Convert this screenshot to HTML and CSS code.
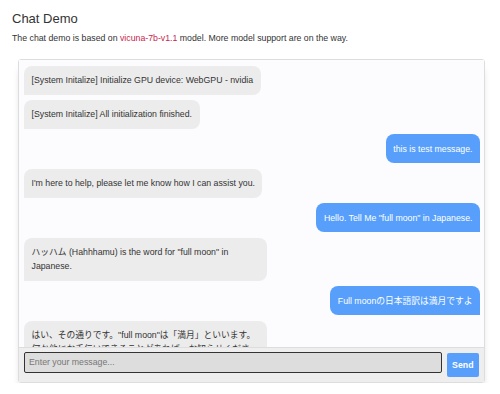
FILE: index.html
```html
<!DOCTYPE html>
<html lang="en">
<head>
    <meta charset="UTF-8">
    <meta name="viewport" content="width=device-width, initial-scale=1.0">
    <title>Chat Demo</title>
    <link rel="stylesheet" href="styles.css">
</head>
<body>
    <div class="page">
        <h2>Chat Demo</h2>
        <p class="intro">The chat demo is based on <a href="#" class="model-link">vicuna-7b-v1.1</a> model. More model support are on the way.</p>

        <div class="chatui">
            <div class="chatui-chat" id="chatui-chat">
                <div class="msg left-msg">
                    <div class="msg-bubble">[System Initalize] Initialize GPU device: WebGPU - nvidia</div>
                </div>
                <div class="msg left-msg">
                    <div class="msg-bubble">[System Initalize] All initialization finished.</div>
                </div>
                <div class="msg right-msg">
                    <div class="msg-bubble">this is test message.</div>
                </div>
                <div class="msg left-msg">
                    <div class="msg-bubble">I'm here to help, please let me know how I can assist you.</div>
                </div>
                <div class="msg right-msg">
                    <div class="msg-bubble">Hello. Tell Me "full moon" in Japanese.</div>
                </div>
                <div class="msg left-msg">
                    <div class="msg-bubble">ハッハム (Hahhhamu) is the word for "full moon" in Japanese.</div>
                </div>
                <div class="msg right-msg">
                    <div class="msg-bubble">Full moonの日本語訳は満月ですよ</div>
                </div>
                <div class="msg left-msg">
                    <div class="msg-bubble">はい、その通りです。"full moon"は「満月」といいます。何か他にお手伝いできることがあれば、お知らせください。</div>
                </div>
            </div>
            <div class="chatui-inputarea">
                <input id="chatui-input" type="text" class="chatui-input" placeholder="Enter your message...">
                <button id="chatui-send-btn" class="chatui-send-btn">Send</button>
            </div>
        </div>
    </div>
</body>
</html>
```

FILE: styles.css
```css
body {
    margin: 0;
    background: #fff;
    color: #333;
    font-family: "Liberation Sans", Arial, "Noto Sans CJK JP", sans-serif;
    font-size: 8.75px;
    line-height: 14px;
}
.page {
    padding: 0 8px 0 12px;
}
h2 {
    margin: 11px 0 0;
    font-size: 13px;
    line-height: 15px;
    font-weight: normal;
    color: #333;
}
.intro {
    margin: 5px 0 0;
}
.model-link {
    color: #c7254e;
    text-decoration: none;
}
.chatui {
    display: flex;
    flex-direction: column;
    width: 467px;
    height: 324px;
    margin: 14px 0 0 6px;
    box-sizing: border-box;
    border: 1px solid #ddd;
    border-radius: 3px;
    box-shadow: 0 8px 8px -3px rgba(0, 0, 0, 0.2);
}
.chatui-chat {
    flex: 1;
    overflow-y: auto;
    padding: 5.5px 4px 5.5px 5px;
    background-color: #fcfcfe;
}
.chatui-chat::-webkit-scrollbar {
    width: 4px;
}
.chatui-chat::-webkit-scrollbar-track {
    background: #ddd;
}
.chatui-chat::-webkit-scrollbar-thumb {
    background: #bdbdbd;
}
.msg {
    display: flex;
    align-items: flex-end;
    margin-bottom: 5.47px;
}
.msg-bubble {
    max-width: 228px;
    padding: 7.5px;
    border-radius: 8px;
    background: #ececec;
}
.left-msg .msg-bubble {
    border-bottom-left-radius: 0;
}
.right-msg {
    flex-direction: row-reverse;
}
.right-msg .msg-bubble {
    background: #579ffb;
    color: #fff;
    border-bottom-right-radius: 0;
}
.chatui-inputarea {
    display: flex;
    align-items: flex-start;
    padding: 5px;
    border-top: 1px solid #ddd;
    background: #eee;
}
.chatui-input {
    flex: 1;
    height: 20.5px;
    margin: -1px 0 0;
    padding: 0 4px;
    box-sizing: border-box;
    border: 1.5px solid #333;
    border-radius: 2px;
    background: #ddd;
    font-family: inherit;
    font-size: 8.75px;
    color: #333;
    outline: none;
}
.chatui-input::placeholder {
    color: #777;
}
.chatui-send-btn {
    height: 24px;
    margin-left: 5px;
    padding: 0 5.5px;
    border: none;
    border-radius: 2px;
    background: #579ffb;
    color: #fff;
    font-family: inherit;
    font-size: 8.75px;
    font-weight: bold;
    cursor: pointer;
}
.chatui-send-btn:hover {
    background: #577bfb;
}
```
